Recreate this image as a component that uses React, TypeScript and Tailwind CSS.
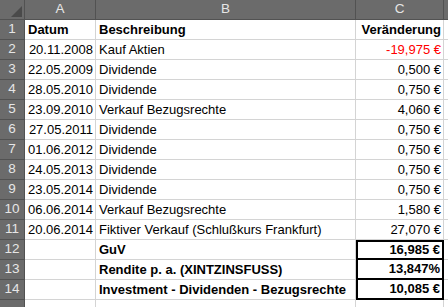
const rows: { n: number; date?: string; desc: string; value: string; red?: boolean; bold?: boolean; box?: 'first' | 'rest' }[] = [
  { n: 2, date: '20.11.2008', desc: 'Kauf Aktien', value: '-19,975 €', red: true },
  { n: 3, date: '22.05.2009', desc: 'Dividende', value: '0,500 €' },
  { n: 4, date: '28.05.2010', desc: 'Dividende', value: '0,750 €' },
  { n: 5, date: '23.09.2010', desc: 'Verkauf Bezugsrechte', value: '4,060 €' },
  { n: 6, date: '27.05.2011', desc: 'Dividende', value: '0,750 €' },
  { n: 7, date: '01.06.2012', desc: 'Dividende', value: '0,750 €' },
  { n: 8, date: '24.05.2013', desc: 'Dividende', value: '0,750 €' },
  { n: 9, date: '23.05.2014', desc: 'Dividende', value: '0,750 €' },
  { n: 10, date: '06.06.2014', desc: 'Verkauf Bezugsrechte', value: '1,580 €' },
  { n: 11, date: '20.06.2014', desc: 'Fiktiver Verkauf (Schlußkurs Frankfurt)', value: '27,070 €' },
  { n: 12, desc: 'GuV', value: '16,985 €', bold: true, box: 'first' },
  { n: 13, desc: 'Rendite p. a. (XINTZINSFUSS)', value: '13,847%', bold: true, box: 'rest' },
  { n: 14, desc: 'Investment - Dividenden - Bezugsrechte', value: '10,085 €', bold: true, box: 'rest' },
];

const cell = 'h-5 border-r border-b border-[#d4d4d4] flex items-center overflow-hidden whitespace-nowrap';
const rowHead = 'h-5 bg-[#6b6b6b] border-r border-b border-[#525252] flex items-center justify-center text-[#e6e6e6] text-[13.5px]';

export default function App() {
  return (
    <div className="w-[448px] h-[307px] overflow-hidden bg-white text-[13px] text-black font-['Liberation_Sans',Arial,sans-serif]">
      <div className="grid grid-cols-[25px_71px_260px_88px_4px]">
        {/* column headers */}
        <div className="h-5 bg-[#6b6b6b] border-r border-b border-[#525252] relative">
          <svg className="absolute right-[2px] bottom-[2px]" width="11" height="11" viewBox="0 0 11 11">
            <polygon points="11,0 11,11 0,11" fill="#4a4a4a" />
          </svg>
        </div>
        <div className={rowHead}>A</div>
        <div className={rowHead}>B</div>
        <div className={rowHead}>C</div>
        <div className="h-5 bg-[#6b6b6b] border-b border-[#525252]" />

        {/* row 1 */}
        <div className={rowHead}>1</div>
        <div className={cell + ' font-bold pl-[3px]'}>Datum</div>
        <div className={cell + ' font-bold pl-[3px]'}>Beschreibung</div>
        <div className={cell + ' font-bold justify-end pr-[2px]'}>Veränderung</div>
        <div className={cell + ' border-r-0'} />

        {rows.map((r) => (
          <div key={r.n} className="contents">
            <div className={rowHead}>{r.n}</div>
            <div className={cell + ' justify-end pr-[2px]'}>{r.date}</div>
            <div className={cell + ' pl-[3px]' + (r.bold ? ' font-bold' : '')}>{r.desc}</div>
            {r.box ? (
              <div
                className={
                  'h-5 flex items-center justify-end pr-[2px] font-bold border-black border-l-2 border-r-2 border-b-2 ' +
                  (r.box === 'first' ? 'border-t-2' : '')
                }
              >
                {r.value}
              </div>
            ) : (
              <div className={cell + ' justify-end pr-[2px]' + (r.red ? ' text-[#ff0000]' : '')}>{r.value}</div>
            )}
            <div className={cell + ' border-r-0'} />
          </div>
        ))}

        {/* partial row 15, cut off by the window */}
        <div className={rowHead} />
        <div className={cell} />
        <div className={cell} />
        <div className={cell} />
        <div className={cell + ' border-r-0'} />
      </div>
    </div>
  );
}
